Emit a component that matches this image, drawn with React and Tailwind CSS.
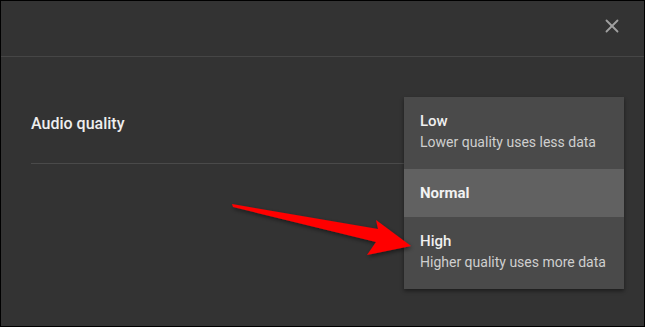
import { X } from "lucide-react";

const options = [
  { label: "Low", desc: "Lower quality uses less data" },
  { label: "Normal", selected: true },
  { label: "High", desc: "Higher quality uses more data" },
];

export default function App() {
  return (
    <div className="w-[645px] h-[327px] border border-black bg-[#333333] relative overflow-hidden font-['Roboto',sans-serif]">
      {/* Header */}
      <div className="h-[56px] border-b border-[#464646] flex items-start justify-end pt-[14px] pr-[21px]">
        <X className="w-[22px] h-[22px] text-[#a0a0a0]" strokeWidth={2} />
      </div>

      {/* Setting row */}
      <div className="px-[30px] pt-[57px]">
        <div className="pb-[30px] border-b border-[#4a4a4a] w-[373px] text-[16px] font-medium text-[#eeeeee] leading-[19px]">
          Audio quality
        </div>
      </div>

      {/* Dropdown menu */}
      <div className="absolute left-[403px] top-[96px] w-[220px] bg-[#4a4a4a] shadow-[0_2px_4px_rgba(0,0,0,0.45)]">
        {options.map((o) =>
          o.selected ? (
            <div key={o.label} className="h-[48px] bg-[#616161] px-[16px] flex items-center">
              <span className="text-[15px] font-bold text-[#f2f2f2]">{o.label}</span>
            </div>
          ) : (
            <div key={o.label} className="h-[72px] px-[16px] pt-[15px]">
              <div className="text-[15px] font-medium text-[#f0f0f0] leading-[18px]">{o.label}</div>
              <div className="text-[14px] text-[#cfcfcf] leading-[18px] mt-[3px]">{o.desc}</div>
            </div>
          )
        )}
      </div>

      {/* Red arrow annotation */}
      <svg className="absolute left-0 top-0" width="645" height="327" viewBox="0 0 645 327">
        <defs>
          <filter id="sh" x="-10%" y="-50%" width="130%" height="200%">
            <feDropShadow dx="1" dy="2" stdDeviation="2" floodColor="#000" floodOpacity="0.5" />
          </filter>
        </defs>
        <polygon
          points="231,203 377,228 375,219 410,245 366,254 375,241 232,206"
          fill="#ff0000"
          filter="url(#sh)"
        />
      </svg>
    </div>
  );
}
